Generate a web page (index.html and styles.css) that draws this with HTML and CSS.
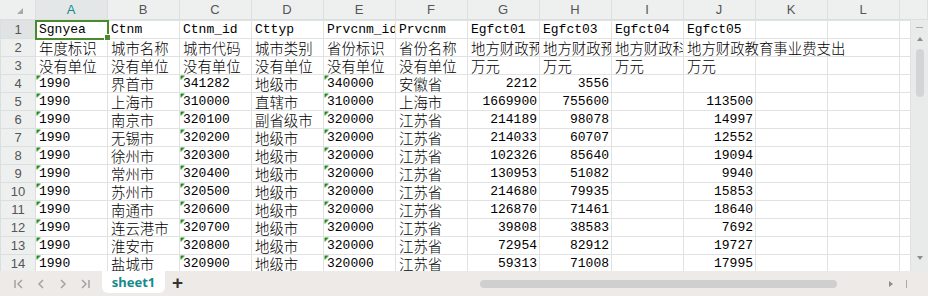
FILE: index.html
```
<!DOCTYPE html>
<html lang="zh-CN">
<head>
    <meta charset="UTF-8">
    <title>sheet1</title>
    <link rel="stylesheet" href="styles.css">
</head>
<body>
<div class="book">
    <table class="cols">
        <colgroup>
            <col class="c-rh"><col class="c"><col class="c"><col class="c"><col class="c"><col class="c"><col class="c"><col class="c"><col class="c"><col class="c"><col class="c"><col class="c"><col class="c"><col>
        </colgroup>
        <tr>
            <th class="corner"><span class="tri"></span></th>
            <th class="sel">A</th><th>B</th><th>C</th><th>D</th><th>E</th><th>F</th><th>G</th><th>H</th><th>I</th><th>J</th><th>K</th><th>L</th><th></th>
        </tr>
    </table>
    <div class="body">
        <div class="grid">
            <table class="cells">
                <colgroup>
                    <col class="c-rh"><col class="c"><col class="c"><col class="c"><col class="c"><col class="c"><col class="c"><col class="c"><col class="c"><col class="c"><col class="c"><col class="c"><col class="c"><col>
                </colgroup>
                <tr><td class="rh on">1</td><td class="active">Sgnyea</td><td>Ctnm</td><td>Ctnm_id</td><td>Cttyp</td><td>Prvcnm_id</td><td>Prvcnm</td><td>Egfct01</td><td>Egfct03</td><td>Egfct04</td><td>Egfct05</td><td></td><td></td><td></td></tr>
                <tr><td class="rh">2</td><td class="zh">年度标识</td><td class="zh">城市名称</td><td class="zh">城市代码</td><td class="zh">城市类别</td><td class="zh">省份标识</td><td class="zh">省份名称</td><td class="zh">地方财政预算内收入</td><td class="zh">地方财政预算内支出</td><td class="zh">地方财政科学事业费支出</td><td class="zh spill">地方财政教育事业费支出</td><td></td><td></td><td></td></tr>
                <tr><td class="rh">3</td><td class="zh">没有单位</td><td class="zh">没有单位</td><td class="zh">没有单位</td><td class="zh">没有单位</td><td class="zh">没有单位</td><td class="zh">没有单位</td><td class="zh">万元</td><td class="zh">万元</td><td class="zh">万元</td><td class="zh">万元</td><td></td><td></td><td></td></tr>
                <tr><td class="rh">4</td><td class="tx">1990</td><td class="zh">界首市</td><td class="tx">341282</td><td class="zh">地级市</td><td class="tx">340000</td><td class="zh">安徽省</td><td class="num">2212</td><td class="num">3556</td><td></td><td></td><td></td><td></td><td></td></tr>
                <tr><td class="rh">5</td><td class="tx">1990</td><td class="zh">上海市</td><td class="tx">310000</td><td class="zh">直辖市</td><td class="tx">310000</td><td class="zh">上海市</td><td class="num">1669900</td><td class="num">755600</td><td></td><td class="num">113500</td><td></td><td></td><td></td></tr>
                <tr><td class="rh">6</td><td class="tx">1990</td><td class="zh">南京市</td><td class="tx">320100</td><td class="zh">副省级市</td><td class="tx">320000</td><td class="zh">江苏省</td><td class="num">214189</td><td class="num">98078</td><td></td><td class="num">14997</td><td></td><td></td><td></td></tr>
                <tr><td class="rh">7</td><td class="tx">1990</td><td class="zh">无锡市</td><td class="tx">320200</td><td class="zh">地级市</td><td class="tx">320000</td><td class="zh">江苏省</td><td class="num">214033</td><td class="num">60707</td><td></td><td class="num">12552</td><td></td><td></td><td></td></tr>
                <tr><td class="rh">8</td><td class="tx">1990</td><td class="zh">徐州市</td><td class="tx">320300</td><td class="zh">地级市</td><td class="tx">320000</td><td class="zh">江苏省</td><td class="num">102326</td><td class="num">85640</td><td></td><td class="num">19094</td><td></td><td></td><td></td></tr>
                <tr><td class="rh">9</td><td class="tx">1990</td><td class="zh">常州市</td><td class="tx">320400</td><td class="zh">地级市</td><td class="tx">320000</td><td class="zh">江苏省</td><td class="num">130953</td><td class="num">51082</td><td></td><td class="num">9940</td><td></td><td></td><td></td></tr>
                <tr><td class="rh">10</td><td class="tx">1990</td><td class="zh">苏州市</td><td class="tx">320500</td><td class="zh">地级市</td><td class="tx">320000</td><td class="zh">江苏省</td><td class="num">214680</td><td class="num">79935</td><td></td><td class="num">15853</td><td></td><td></td><td></td></tr>
                <tr><td class="rh">11</td><td class="tx">1990</td><td class="zh">南通市</td><td class="tx">320600</td><td class="zh">地级市</td><td class="tx">320000</td><td class="zh">江苏省</td><td class="num">126870</td><td class="num">71461</td><td></td><td class="num">18640</td><td></td><td></td><td></td></tr>
                <tr><td class="rh">12</td><td class="tx">1990</td><td class="zh">连云港市</td><td class="tx">320700</td><td class="zh">地级市</td><td class="tx">320000</td><td class="zh">江苏省</td><td class="num">39808</td><td class="num">38583</td><td></td><td class="num">7692</td><td></td><td></td><td></td></tr>
                <tr><td class="rh">13</td><td class="tx">1990</td><td class="zh">淮安市</td><td class="tx">320800</td><td class="zh">地级市</td><td class="tx">320000</td><td class="zh">江苏省</td><td class="num">72954</td><td class="num">82912</td><td></td><td class="num">19727</td><td></td><td></td><td></td></tr>
                <tr><td class="rh">14</td><td class="tx">1990</td><td class="zh">盐城市</td><td class="tx">320900</td><td class="zh">地级市</td><td class="tx">320000</td><td class="zh">江苏省</td><td class="num">59313</td><td class="num">71008</td><td></td><td class="num">17995</td><td></td><td></td><td></td></tr>
            </table>
        </div>
        <div class="vscroll">
            <span class="dash"></span>
            <span class="arr up"></span>
            <span class="vthumb"></span>
            <span class="fill"></span>
            <span class="arr down"></span>
        </div>
    </div>
    <div class="tabbar">
        <div class="nav">
            <svg width="12" height="12" viewBox="0 0 12 12"><path d="M2 2v8M9 2L5 6l4 4" fill="none" stroke="#a3a3a3" stroke-width="1.5"/></svg>
            <svg width="12" height="12" viewBox="0 0 12 12"><path d="M8 2L4 6l4 4" fill="none" stroke="#a3a3a3" stroke-width="1.5"/></svg>
            <svg width="12" height="12" viewBox="0 0 12 12"><path d="M4 2l4 4-4 4" fill="none" stroke="#a3a3a3" stroke-width="1.5"/></svg>
            <svg width="12" height="12" viewBox="0 0 12 12"><path d="M3 2l4 4-4 4M10 2v8" fill="none" stroke="#a3a3a3" stroke-width="1.5"/></svg>
        </div>
        <div class="tab">sheet1</div>
        <div class="plus">+</div>
        <div class="hbar">
            <span class="hthumb"></span>
            <span class="fill"></span>
            <span class="right"></span>
            <span class="pipe"></span>
        </div>
    </div>
</div>
</body>
</html>
```
FILE: styles.css
```
body {
    margin: 0;
    background: #ffffff;
    font-family: "Liberation Sans", "Noto Sans CJK SC", sans-serif;
}
.book {
    width: 928px;
    height: 296px;
    overflow: hidden;
    display: flex;
    flex-direction: column;
}
table {
    border-collapse: collapse;
    table-layout: fixed;
}
.c-rh {
    width: 35px;
}
.c {
    width: 72px;
}

/* column header */
.cols {
    width: 928px;
    background: #eef0f0;
    flex-shrink: 0;
}
.cols th {
    height: 19px;
    padding: 0;
    font-weight: normal;
    font-size: 13px;
    line-height: 16px;
    color: #555555;
    border-right: 1px solid #dcdfdf;
    border-bottom: 1px solid #dcdfdf;
}
.cols th.sel {
    color: #138b8b;
    background: #e4e7e7;
}
.corner {
    text-align: right;
}
.tri {
    display: inline-block;
    width: 0;
    height: 0;
    margin-right: 12px;
    margin-top: 4px;
    border-left: 6px solid transparent;
    border-bottom: 6px solid #a6a9a9;
}

/* cells */
.body {
    display: flex;
    flex: 1;
    min-height: 0;
}
.grid {
    width: 911px;
    overflow: hidden;
}
.cells {
    width: 911px;
}
.cells td {
    height: 17px;
    padding: 0 2px 0 3px;
    border: 1px solid #e1e3e3;
    font-family: "Liberation Mono", "Noto Sans CJK SC", monospace;
    font-size: 13px;
    line-height: 16px;
    color: #000000;
    white-space: nowrap;
    overflow: hidden;
    vertical-align: bottom;
}
.cells td.zh {
    font-family: "Noto Sans CJK SC", sans-serif;
    font-weight: 300;
    font-size: 14.4px;
}
.cells td.spill {
    overflow: visible;
}
.cells td.num {
    text-align: right;
}
.cells td.tx {
    background: linear-gradient(135deg, #1f8a1f 0 3.5px, transparent 3.5px);
}
.cells td.rh {
    padding: 0;
    text-align: center;
    background: #eef0f0;
    border-color: #dcdfdf;
    font-family: "Liberation Sans", sans-serif;
    font-size: 13px;
    color: #555555;
    vertical-align: middle;
}
.cells td.rh.on {
    background: #e0e3e3;
}
.cells td.active {
    position: relative;
    overflow: visible;
    outline: 2px solid #4a8a2c;
    outline-offset: -1px;
}
.cells td.active::after {
    content: "";
    position: absolute;
    right: -4px;
    bottom: -3px;
    width: 5px;
    height: 5px;
    background: #4a8a2c;
    border: 1px solid #ffffff;
}

/* vertical scrollbar */
.vscroll {
    width: 17px;
    background: #e9ebeb;
    display: flex;
    flex-direction: column;
    align-items: center;
}
.dash {
    width: 7px;
    height: 1px;
    margin-top: 7px;
    background: #a9acac;
}
.arr {
    width: 0;
    height: 0;
    border-left: 3px solid transparent;
    border-right: 3px solid transparent;
}
.arr.up {
    margin-top: 9px;
    border-bottom: 4px solid #8c8f8f;
}
.arr.down {
    margin-bottom: 11px;
    border-top: 4px solid #8c8f8f;
}
.vthumb {
    width: 8px;
    height: 48px;
    margin-top: 8px;
    border-radius: 4px;
    background: #d2d5d5;
}
.fill {
    flex: 1;
}

/* sheet tabs */
.tabbar {
    height: 25px;
    flex-shrink: 0;
    display: flex;
    background: #eeeae8;
}
.nav {
    width: 102px;
    display: flex;
    align-items: center;
    gap: 10px;
    padding-left: 13px;
    box-sizing: border-box;
}
.tab {
    width: 63px;
    height: 22px;
    background: #ffffff;
    border-radius: 0 0 6px 6px;
    color: #168a8a;
    font-family: "Noto Sans", sans-serif;
    font-weight: bold;
    font-size: 13px;
    line-height: 22px;
    text-align: center;
}
.plus {
    width: 25px;
    text-align: center;
    font-family: "Liberation Sans", sans-serif;
    font-size: 19px;
    font-weight: bold;
    line-height: 24px;
    color: #333333;
}
.hbar {
    flex: 1;
    display: flex;
    align-items: center;
    padding-left: 290px;
}
.hthumb {
    width: 357px;
    height: 8px;
    border-radius: 4px;
    background: #d0cfcf;
}
.right {
    width: 0;
    height: 0;
    border-top: 3px solid transparent;
    border-bottom: 3px solid transparent;
    border-left: 4px solid #8c8c8c;
    margin-right: 13px;
}
.pipe {
    width: 1px;
    height: 8px;
    background: #a9a9a9;
    margin-right: 21px;
}
```
